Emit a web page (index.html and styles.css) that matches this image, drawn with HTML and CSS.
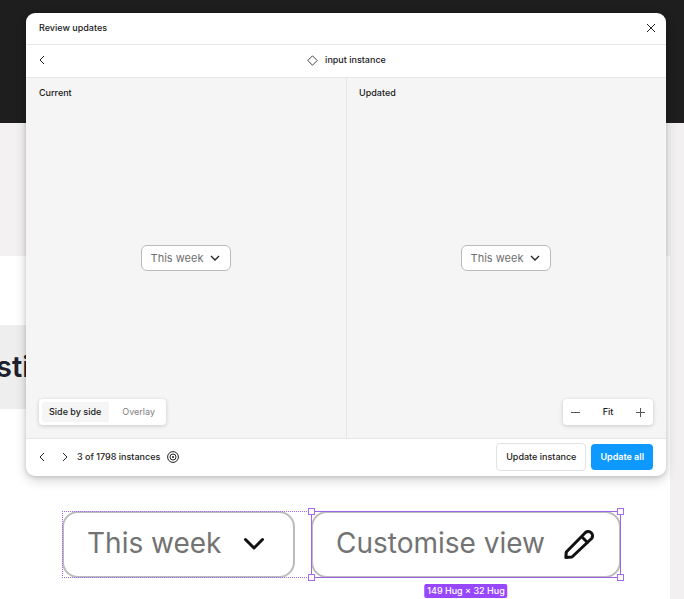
FILE: index.html
```html
<!DOCTYPE html>
<html lang="en">
<head>
<meta charset="utf-8">
<meta name="viewport" content="width=device-width, initial-scale=1">
<title>Review updates</title>
<link rel="stylesheet" href="styles.css">
</head>
<body>
<div class="backdrop">
  <div class="band band-dark"></div>
  <div class="backdrop-page">
    <div class="backdrop-main">
      <div class="band band-tint"></div>
      <div class="band band-gap"></div>
      <div class="band band-title"><span>sti</span></div>
    </div>
    <div class="backdrop-edge"></div>
  </div>
</div>

<section class="modal" role="dialog" aria-labelledby="modal-title">
  <header class="modal-header">
    <h1 class="label" id="modal-title">Review updates</h1>
    <button class="icon-button" aria-label="Close">
      <svg width="10" height="10" viewBox="0 0 10 10"><path d="M1 1l8 8M9 1l-8 8"/></svg>
    </button>
  </header>
  <div class="modal-subheader">
    <button class="icon-button" aria-label="Back">
      <svg width="6" height="10" viewBox="0 0 6 10"><path d="M5 1L1 5l4 4"/></svg>
    </button>
    <h2 class="label instance-name">
      <svg width="11" height="11" viewBox="0 0 11 11"><path d="M5.500 .8L10.200 5.500 5.500 10.200 .8 5.500z"/></svg>
      input instance
    </h2>
    <span></span>
  </div>
  <div class="compare">
    <div class="pane">
      <h3 class="label">Current</h3>
      <div class="preview">
        <button class="select-chip">This week
          <svg width="10" height="6" viewBox="0 0 10 6"><path d="M1 1l4 4 4-4"/></svg>
        </button>
      </div>
      <div class="toolbar">
        <button class="tab tab-active">Side by side</button>
        <button class="tab">Overlay</button>
      </div>
    </div>
    <div class="pane">
      <h3 class="label">Updated</h3>
      <div class="preview">
        <button class="select-chip">This week
          <svg width="10" height="6" viewBox="0 0 10 6"><path d="M1 1l4 4 4-4"/></svg>
        </button>
      </div>
      <div class="toolbar toolbar-zoom">
        <button class="icon-button" aria-label="Zoom out">
          <svg class="thin" width="9" height="9" viewBox="0 0 9 9"><path d="M0 4.500h9"/></svg>
        </button>
        <button class="fit">Fit</button>
        <button class="icon-button" aria-label="Zoom in">
          <svg class="thin" width="9" height="9" viewBox="0 0 9 9"><path d="M0 4.500h9M4.500 0v9"/></svg>
        </button>
      </div>
    </div>
  </div>
  <footer class="modal-footer">
    <div class="pager">
      <button class="icon-button" aria-label="Previous instance">
        <svg width="6" height="10" viewBox="0 0 6 10"><path d="M5 1L1 5l4 4"/></svg>
      </button>
      <button class="icon-button" aria-label="Next instance">
        <svg width="6" height="10" viewBox="0 0 6 10"><path d="M1 1l4 4-4 4"/></svg>
      </button>
      <span class="count">3 of 1798 instances</span>
      <button class="icon-button" aria-label="Locate instance">
        <svg width="12" height="12" viewBox="0 0 12 12"><circle cx="6" cy="6" r="5.400"/><circle cx="6" cy="6" r="3"/><circle class="dot" cx="6" cy="6" r="1"/></svg>
      </button>
    </div>
    <div class="actions">
      <button class="button">Update instance</button>
      <button class="button button-primary">Update all</button>
    </div>
  </footer>
</section>

<main class="canvas">
  <div class="frame">
    <button class="big-chip">This week
      <svg width="22" height="14" viewBox="0 0 22 14"><path d="M2.500 2.500l8.500 8.500 8.500-8.500"/></svg>
    </button>
    <div class="selection">
      <button class="big-chip">Customise view
        <svg width="32" height="32" viewBox="0 0 32 32"><path d="M2.800 29.500L3.300 24 22.500 4.500A4.300 4.300 0 0 1 28.600 10.500L9 29zM18.500 8.500l6 6"/></svg>
      </button>
      <i class="handle handle-tl"></i><i class="handle handle-tr"></i>
      <i class="handle handle-bl"></i><i class="handle handle-br"></i>
      <span class="size-tag">149 Hug × 32 Hug</span>
    </div>
  </div>
</main>
</body>
</html>
```
FILE: styles.css
```css
* { box-sizing: border-box; }

body {
  margin: 0;
  min-height: 100vh;
  position: relative;
  overflow: hidden;
  background: #fff;
  color: #1a1a1a;
  font: 500 9px/16px Inter, "Liberation Sans", sans-serif;
}

button {
  margin: 0;
  padding: 0;
  border: 0;
  background: none;
  color: inherit;
  font: inherit;
  cursor: pointer;
}

svg {
  display: block;
  flex: none;
  fill: none;
  stroke: #222;
  stroke-width: 1;
}

/* Document behind the dialog */
.backdrop {
  position: absolute;
  inset: 0;
  z-index: -1;
  display: flex;
  flex-direction: column;
}
.backdrop-page { flex: 1; display: flex; }
.backdrop-main { flex: 1; }
.backdrop-edge { width: 14px; background: #f3f0f1; }
.band-dark { height: 123px; background: #1e1e1e; }
.band-tint { height: 133px; background: #f4f1f2; }
.band-gap { height: 69px; }
.band-title {
  height: 84px;
  margin-right: 14px;
  display: flex;
  align-items: center;
  background: #eee;
  color: #20202c;
  font-size: 29px;
  font-weight: 600;
}
.band-title span { margin-left: -4px; }

/* Dialog */
.modal {
  margin: 13px 18px 0 26px;
  border-radius: 9px;
  overflow: hidden;
  background: #fff;
  box-shadow: 0 4px 12px rgba(0, 0, 0, .18), 0 1px 4px rgba(0, 0, 0, .14);
}
.label { margin: 0; font-size: 9px; font-weight: 500; }

.icon-button {
  display: flex;
  align-items: center;
  justify-content: center;
}

.modal-header,
.modal-subheader {
  display: flex;
  align-items: center;
  justify-content: space-between;
  padding: 0 10px 1px 13px;
  border-bottom: 1px solid #e6e6e6;
}
.modal-header { height: 32px; }
.modal-subheader {
  height: 33px;
  display: grid;
  grid-template-columns: 1fr auto 1fr;
  padding: 0 12px 2px 13px;
}
.modal-subheader .icon-button { justify-self: start; }
.instance-name { display: flex; align-items: center; gap: 7px; }
.instance-name svg { stroke: #444; }

.compare {
  display: grid;
  grid-template-columns: 1fr 1fr;
  background: #f5f5f5;
  border-bottom: 1px solid #e6e6e6;
}
.pane {
  min-height: 360px;
  display: flex;
  flex-direction: column;
  padding: 7px 13px 13px;
}
.pane + .pane { border-left: 1px solid #e6e6e6; padding-left: 12px; }
.preview {
  flex: 1;
  display: flex;
  align-items: center;
  justify-content: center;
  padding-top: 16px;
}
.select-chip {
  display: flex;
  align-items: center;
  gap: 7px;
  height: 26px;
  padding: 0 10px 0 9px;
  border: 1px solid #bbb;
  border-radius: 6px;
  background: #fff;
  color: #707070;
  font-size: 11px;
  font-weight: 400;
}
.select-chip svg { stroke-width: 1.3px; }

.toolbar {
  align-self: flex-start;
  display: flex;
  align-items: center;
  height: 26px;
  padding: 3px;
  border-radius: 4px;
  background: #fff;
  box-shadow: 0 1px 4px rgba(0, 0, 0, .18);
}
.toolbar-zoom {
  align-self: flex-end;
  justify-content: space-between;
  width: 90px;
  padding: 0 8px;
}
.tab {
  height: 20px;
  padding: 0 8px 0 13px;
  border-radius: 3px;
  color: #808080;
  font-weight: 400;
}
.tab-active { padding: 0 8px 0 7px; background: #f5f5f5; color: #1a1a1a; font-weight: 500; }
.thin { stroke: #555; }

.modal-footer {
  height: 37px;
  display: flex;
  align-items: center;
  justify-content: space-between;
  padding: 0 13px 1px;
}
.pager { display: flex; align-items: center; }
.pager .icon-button + .icon-button { margin-left: 17px; }
.count { margin: 0 7px 0 9px; }
.pager .dot { fill: #222; stroke: none; }
.actions { display: flex; align-items: center; gap: 5px; }
.button {
  height: 28px;
  padding: 0 9px;
  border: 1px solid #e2e2e2;
  border-radius: 4px;
}
.button-primary {
  height: 26px;
  border: 0;
  background: #0d99ff;
  color: #fff;
  font-weight: 600;
}

/* Canvas objects under the dialog */
.canvas { padding: 35px 63px 0 62px; }
.frame {
  position: relative;
  display: flex;
  justify-content: space-between;
}
.frame::after,
.selection::after {
  content: "";
  position: absolute;
  inset: 0;
  border: 1px dotted #a46bf0;
  pointer-events: none;
}
.big-chip {
  display: flex;
  align-items: center;
  gap: 21px;
  height: 67px;
  padding: 0 28px 3px 23px;
  border: 2px solid #bbb;
  border-radius: 16px;
  color: #737373;
  font-size: 28px;
  font-weight: 400;
  line-height: 32px;
}
.big-chip svg {
  position: relative;
  top: 1px;
  stroke: #111;
  stroke-width: 3px;
  stroke-linecap: round;
  stroke-linejoin: round;
}
.selection { position: relative; z-index: 1; }
.selection::after { border: 1px solid #9d63ea; }
.selection .big-chip { gap: 18px; padding-right: 24px; }
.handle {
  position: absolute;
  z-index: 1;
  width: 7px;
  height: 7px;
  border: 1px solid #a46bf0;
  background: #fff;
}
.handle-tl { top: -3px; left: -3px; }
.handle-tr { top: -3px; right: -3px; }
.handle-bl { bottom: -3px; left: -3px; }
.handle-br { bottom: -3px; right: -3px; }
.size-tag {
  position: absolute;
  top: 100%;
  left: 50%;
  margin-top: 6px;
  padding: 0 3px;
  border-radius: 2px;
  transform: translateX(-50%);
  background: #9747ff;
  color: #fff;
  line-height: 14px;
  white-space: nowrap;
}
```
